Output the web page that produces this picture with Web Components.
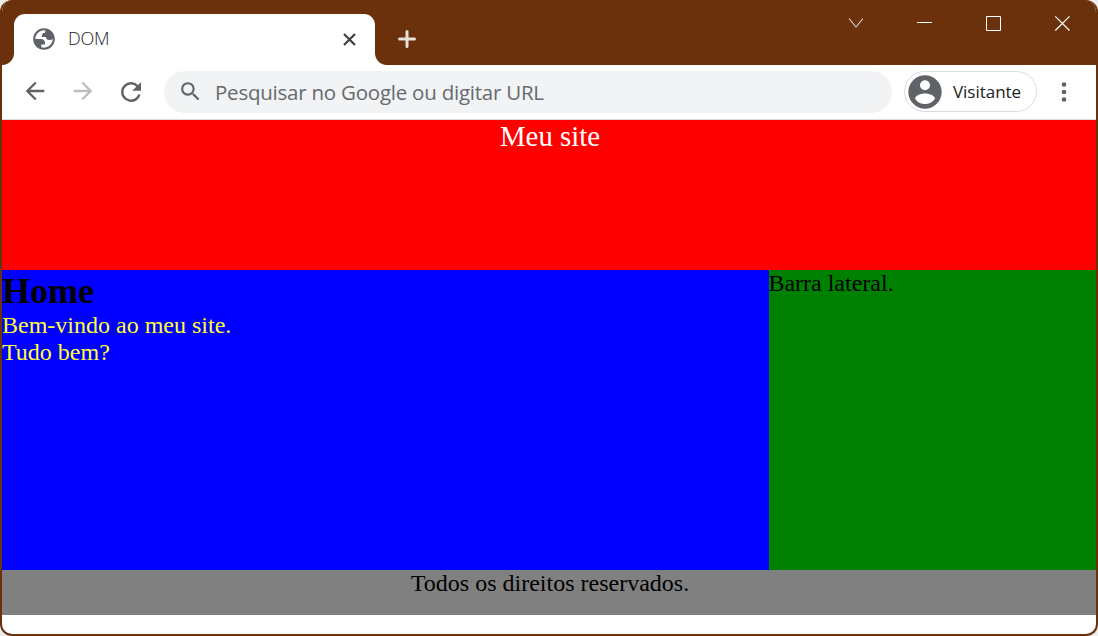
<!DOCTYPE html>
<html lang="pt-BR">
<head>
<meta charset="utf-8">
<title>DOM</title>
<style>
html,body{margin:0;height:100%;overflow:hidden;background:#eee}
</style>
</head>
<body>
<browser-window>
  <tab-strip slot="tabs"><browser-tab>DOM</browser-tab></tab-strip>
  <tool-bar slot="tools"><address-box>Pesquisar no Google ou digitar URL</address-box><profile-chip>Visitante</profile-chip></tool-bar>
  <site-page>
    <span slot="header">Meu site</span>
    <span slot="title">Home</span>
    <span slot="content">Bem-vindo ao meu site.<br>Tudo bem?</span>
    <span slot="side">Barra lateral.</span>
    <span slot="footer">Todos os direitos reservados.</span>
  </site-page>
</browser-window>
<script>
const define = (name, html) => customElements.define(name, class extends HTMLElement {
  constructor() {
    super();
    this.attachShadow({ mode: 'open' }).innerHTML = html;
  }
});

define('browser-window', `<style>
:host{display:flex;flex-direction:column;box-sizing:border-box;width:1098px;height:636px;background:#fff;border:solid #6b310c;border-width:0 2px 2px;border-radius:12px;overflow:hidden}
</style><slot name="tabs"></slot><slot name="tools"></slot><slot></slot>`);

define('tab-strip', `<style>
:host{display:flex;height:65px;background:#6b310c;box-sizing:border-box}
.tabs{display:flex;align-items:flex-end}
.plus{margin:30px 0 0 11px;width:18px;height:18px}
.controls{display:flex;margin-left:auto;padding:15px 26px 0 0;gap:53px}
svg{display:block;flex:none}
</style>
<div class="tabs"><slot></slot></div>
<svg class="plus" viewBox="0 0 18 18" stroke="#e6dfdb" stroke-width="3" stroke-linecap="round"><path d="M9 1.5v15M1.5 9h15"/></svg>
<div class="controls">
<svg width="16" height="16" fill="none" stroke="#e6d9d1" stroke-width="1.1"><path d="M2 3.5l7 8.5 7-8.5"/></svg>
<svg width="16" height="16" fill="none" stroke="#fff"><path d="M1 7.5h15"/></svg>
<svg width="16" height="16" fill="none" stroke="#fff"><path d="M1.5 1.5h14v14h-14z"/></svg>
<svg width="16" height="16" fill="none" stroke="#fff" stroke-width="1.2"><path d="M1.3 1.3l14.2 14.2M15.5 1.3L1.3 15.5"/></svg>
</div>`);

define('browser-tab', `<style>
:host{display:flex;align-items:flex-end}
.foot{width:12px;height:12px;background:radial-gradient(circle at 0 0,#6b310c 11.5px,#fff 12.5px)}
.foot.r{background:radial-gradient(circle at 100% 0,#6b310c 11.5px,#fff 12.5px)}
.tab{display:flex;align-items:center;box-sizing:border-box;width:361px;height:51px;background:#fff;border-radius:11px 11px 0 0;padding:0 19px 1px 17px;font:18px "Open Sans",sans-serif}
.globe{margin-right:11px}
.label{letter-spacing:-.25px;font-weight:300;color:#202124;line-height:24px;padding-bottom:2px}
.close{margin-left:auto}
</style>
<div class="foot"></div>
<div class="tab">
<svg class="globe" width="26" height="26" viewBox="0 0 24 24" fill="#5f6368" fill-rule="evenodd"><path d="M12 2C6.480 2 2 6.480 2 12s4.480 10 10 10 10-4.480 10-10S17.520 2 12 2zM4 12h4.400c3.407.022 4.922 1.730 4.543 5.127H9.488v2.470a8.004 8.004 0 0 0 10.498-8.083C19.327 12.504 18.332 13 17 13c-2.137 0-3.206-.916-3.206-2.750h-3.748c-.274-2.728.683-4.092 2.870-4.092 0-.975.327-1.597.811-1.970A8 8 0 0 0 4 12z"/></svg>
<span class="label"><slot></slot></span>
<svg class="close" width="13" height="13" stroke="#3c4043" stroke-width="2.2"><path d="M1 1l11 11M12 1L1 12"/></svg>
</div><div class="foot r"></div>`);

define('tool-bar', `<style>
:host{display:flex;align-items:center;height:55px;box-sizing:border-box;padding:0 18px 1px 19px;border-bottom:1px solid #dadce0;background:#fff;color:#5f6368}
svg{display:block;flex:none}
.nav{display:flex;gap:20px;margin-right:18px}
.nav svg:last-child{margin-left:-1px}
.menu{margin-left:13px}
</style>
<div class="nav">
<svg width="28" height="28" viewBox="0 0 24 24" fill="currentColor"><path d="M20 11H7.830l5.590-5.590L12 4l-8 8 8 8 1.410-1.410L7.830 13H20v-2z"/></svg>
<svg width="28" height="28" viewBox="0 0 24 24" fill="#bbbdbf"><path d="M12 4l-1.410 1.410L16.170 11H4v2h12.170l-5.580 5.590L12 20l8-8z"/></svg>
<svg width="30" height="30" viewBox="0 0 24 24" fill="currentColor"><path d="M17.650 6.350A7.958 7.958 0 0 0 12 4a8 8 0 1 0 7.730 10h-2.080A6 6 0 1 1 12 6c1.660 0 3.140.690 4.220 1.780L13 11h7V4l-2.350 2.350z"/></svg>
</div><slot></slot>
<svg class="menu" width="28" height="28" viewBox="0 0 28 28" fill="currentColor"><circle cx="14" cy="6.500" r="2.300"/><circle cx="14" cy="14" r="2.300"/><circle cx="14" cy="21.500" r="2.300"/></svg>`);

define('address-box', `<style>
:host{display:flex;align-items:center;width:728px;height:42px;box-sizing:border-box;border-radius:21px;background:#f1f3f4;padding-left:14px;font:20.500px "Open Sans",sans-serif;color:#666a6e;white-space:nowrap}
svg{margin-right:12px;flex:none}
span{letter-spacing:-.23px}
</style>
<svg width="25" height="25" viewBox="0 0 24 24" fill="#5f6368"><path d="M15.500 14h-.790l-.280-.270A6.471 6.471 0 0 0 16 9.500 6.500 6.500 0 1 0 9.500 16c1.610 0 3.090-.590 4.230-1.570l.270.280v.790l5 4.990L20.490 19l-4.990-5zm-6 0a4.500 4.500 0 1 1 0-9 4.500 4.500 0 0 1 0 9z"/></svg><span><slot></slot></span>`);

define('profile-chip', `<style>
:host{display:flex;align-items:center;box-sizing:border-box;width:133px;height:41px;margin-left:12px;border:1px solid #dadce0;border-radius:21px;font:17px "Open Sans",sans-serif;color:#202124}
svg{margin-right:8px;flex:none}
span{letter-spacing:-.03px}
</style>
<svg width="40" height="40" viewBox="0 0 24 24" fill="#5f6368" fill-rule="evenodd"><path d="M12 2a10 10 0 1 0 0 20 10 10 0 0 0 0-20zm0 3a3 3 0 1 1 0 6 3 3 0 0 1 0-6zm0 14.200a7.200 7.200 0 0 1-6-3.220c.030-1.990 4-3.080 6-3.080s5.970 1.090 6 3.080a7.200 7.200 0 0 1-6 3.220z"/></svg><span><slot></slot></span>`);

define('site-page', `<style>
:host{display:grid;grid-template-rows:150px 300px 45px;font:24px/27px "Liberation Serif",serif;color:#000}
header{background:red;color:#fff;font-size:28.800px;line-height:33px;text-align:center;padding-left:2px}
.row{display:grid;grid-template-columns:767px 1fr}
main{background:blue;color:#ff3}
h1{margin:0;padding-top:1px;font-size:36px;line-height:41px;color:#000}
aside{background:green;text-indent:-.6px}
footer{background:gray;text-align:center;padding-left:2px}
</style>
<header><slot name="header"></slot></header>
<div class="row"><main><h1><slot name="title"></slot></h1><slot name="content"></slot></main><aside><slot name="side"></slot></aside></div>
<footer><slot name="footer"></slot></footer>`);
</script>
</body>
</html>
